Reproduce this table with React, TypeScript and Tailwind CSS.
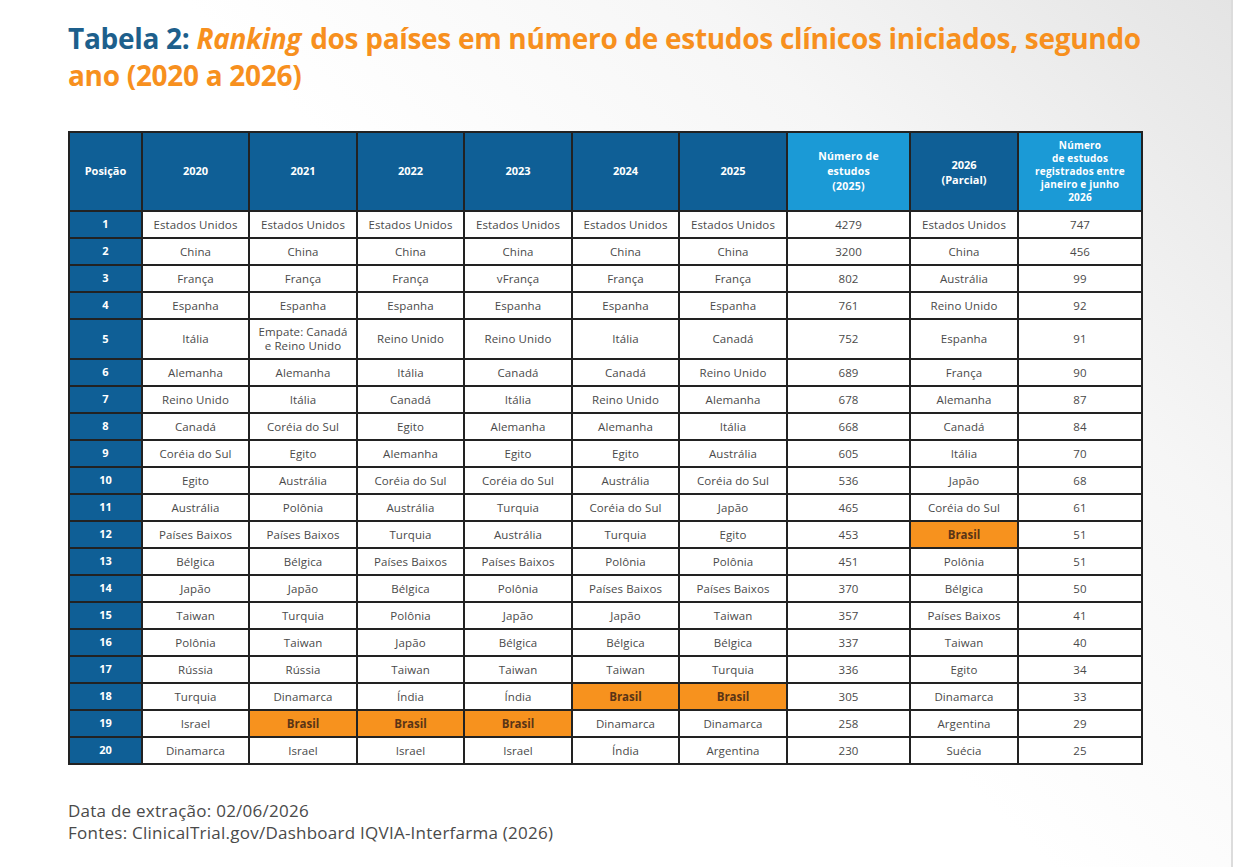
import React from 'react';

type Row = [string, string, string, string, string, string, string, string, string];

// Brasil cells are highlighted in orange.
const ROWS: Row[] = [
  ['Estados Unidos', 'Estados Unidos', 'Estados Unidos', 'Estados Unidos', 'Estados Unidos', 'Estados Unidos', '4279', 'Estados Unidos', '747'],
  ['China', 'China', 'China', 'China', 'China', 'China', '3200', 'China', '456'],
  ['França', 'França', 'França', 'vFrança', 'França', 'França', '802', 'Austrália', '99'],
  ['Espanha', 'Espanha', 'Espanha', 'Espanha', 'Espanha', 'Espanha', '761', 'Reino Unido', '92'],
  ['Itália', 'Empate: Canadá e Reino Unido', 'Reino Unido', 'Reino Unido', 'Itália', 'Canadá', '752', 'Espanha', '91'],
  ['Alemanha', 'Alemanha', 'Itália', 'Canadá', 'Canadá', 'Reino Unido', '689', 'França', '90'],
  ['Reino Unido', 'Itália', 'Canadá', 'Itália', 'Reino Unido', 'Alemanha', '678', 'Alemanha', '87'],
  ['Canadá', 'Coréia do Sul', 'Egito', 'Alemanha', 'Alemanha', 'Itália', '668', 'Canadá', '84'],
  ['Coréia do Sul', 'Egito', 'Alemanha', 'Egito', 'Egito', 'Austrália', '605', 'Itália', '70'],
  ['Egito', 'Austrália', 'Coréia do Sul', 'Coréia do Sul', 'Austrália', 'Coréia do Sul', '536', 'Japão', '68'],
  ['Austrália', 'Polônia', 'Austrália', 'Turquia', 'Coréia do Sul', 'Japão', '465', 'Coréia do Sul', '61'],
  ['Países Baixos', 'Países Baixos', 'Turquia', 'Austrália', 'Turquia', 'Egito', '453', 'Brasil', '51'],
  ['Bélgica', 'Bélgica', 'Países Baixos', 'Países Baixos', 'Polônia', 'Polônia', '451', 'Polônia', '51'],
  ['Japão', 'Japão', 'Bélgica', 'Polônia', 'Países Baixos', 'Países Baixos', '370', 'Bélgica', '50'],
  ['Taiwan', 'Turquia', 'Polônia', 'Japão', 'Japão', 'Taiwan', '357', 'Países Baixos', '41'],
  ['Polônia', 'Taiwan', 'Japão', 'Bélgica', 'Bélgica', 'Bélgica', '337', 'Taiwan', '40'],
  ['Rússia', 'Rússia', 'Taiwan', 'Taiwan', 'Taiwan', 'Turquia', '336', 'Egito', '34'],
  ['Turquia', 'Dinamarca', 'Índia', 'Índia', 'Brasil', 'Brasil', '305', 'Dinamarca', '33'],
  ['Israel', 'Brasil', 'Brasil', 'Brasil', 'Dinamarca', 'Dinamarca', '258', 'Argentina', '29'],
  ['Dinamarca', 'Israel', 'Israel', 'Israel', 'Índia', 'Argentina', '230', 'Suécia', '25'],
];

const COL_WIDTHS = ['w-[73px]', 'w-[107px]', 'w-[108px]', 'w-[107px]', 'w-[108px]', 'w-[107px]', 'w-[108px]', 'w-[123px]', 'w-[108px]', 'w-[124px]'];

const darkHead = 'bg-[#0f5f96] text-white font-bold text-[11px] border-2 border-[#222] text-center align-middle';
const lightHead = 'bg-[#1b9ad6] text-white font-bold tracking-[0.2px] border-2 border-[#222] text-center align-middle';

export default function App() {
  return (
    <div className="min-h-screen w-full bg-[linear-gradient(225deg,#e4e4e4_0%,#f6f6f6_25%,#ffffff_50%)] font-['Open_Sans',sans-serif] flex">
      <div className="flex-1 pl-[68px] pt-[20px]">
        <h1 className="font-['Open_Sans',sans-serif] font-bold text-[28px] leading-[37px] tracking-[-0.3px] text-[#f7901e] whitespace-nowrap">
          <span className="text-[#1d5f8c]">Tabela 2:</span> <i className="pr-[2px]">Ranking</i> dos países em número de estudos clínicos iniciados, segundo
          <br />
          ano (2020 a 2026)
        </h1>

        <table className="table-fixed border-collapse w-[1073px] mt-[37px]">
          <thead>
            <tr className="h-[79px]">
              <th className={`${darkHead} ${COL_WIDTHS[0]}`}>Posição</th>
              {['2020', '2021', '2022', '2023', '2024', '2025'].map((y, i) => (
                <th key={y} className={`${darkHead} ${COL_WIDTHS[i + 1]}`}>{y}</th>
              ))}
              <th className={`${lightHead} text-[10.5px] leading-[15px] ${COL_WIDTHS[7]}`}>
                Número de
                <br />
                estudos
                <br />
                (2025)
              </th>
              <th className={`${darkHead} leading-[15px] ${COL_WIDTHS[8]}`}>
                2026
                <br />
                (Parcial)
              </th>
              <th className={`${lightHead} text-[10px] leading-[13px] ${COL_WIDTHS[9]}`}>
                Número
                <br />
                de estudos
                <br />
                registrados entre
                <br />
                janeiro e junho
                <br />
                2026
              </th>
            </tr>
          </thead>
          <tbody>
            {ROWS.map((row, r) => (
              <tr key={r} className={r === 4 ? 'h-[40px]' : 'h-[27px]'}>
                <td className="bg-[#0f5f96] text-white font-bold text-[11px] text-center border-2 border-[#222]">{r + 1}</td>
                {row.map((cell, c) =>
                  cell === 'Brasil' ? (
                    <td key={c} className="bg-[#f7921e] text-[#5a3416] font-bold text-[11.5px] text-center border-2 border-[#222]">
                      {cell}
                    </td>
                  ) : (
                    <td key={c} className="bg-white text-[#4a4a4a] text-[11.5px] leading-[14px] tracking-[0.1px] text-center border-2 border-[#222] px-1">
                      {cell === 'Empate: Canadá e Reino Unido' ? (
                        <>
                          Empate: Canadá
                          <br />e Reino Unido
                        </>
                      ) : (
                        cell
                      )}
                    </td>
                  )
                )}
              </tr>
            ))}
          </tbody>
        </table>

        <div className="mt-[35px] text-[17px] leading-[22px] tracking-[0.25px] text-[#4a4a4a]">
          <p>Data de extração: 02/06/2026</p>
          <p>Fontes: ClinicalTrial.gov/Dashboard IQVIA-Interfarma (2026)</p>
        </div>
      </div>
      <div className="w-[2px] bg-[#dcdcdc]" />
    </div>
  );
}
